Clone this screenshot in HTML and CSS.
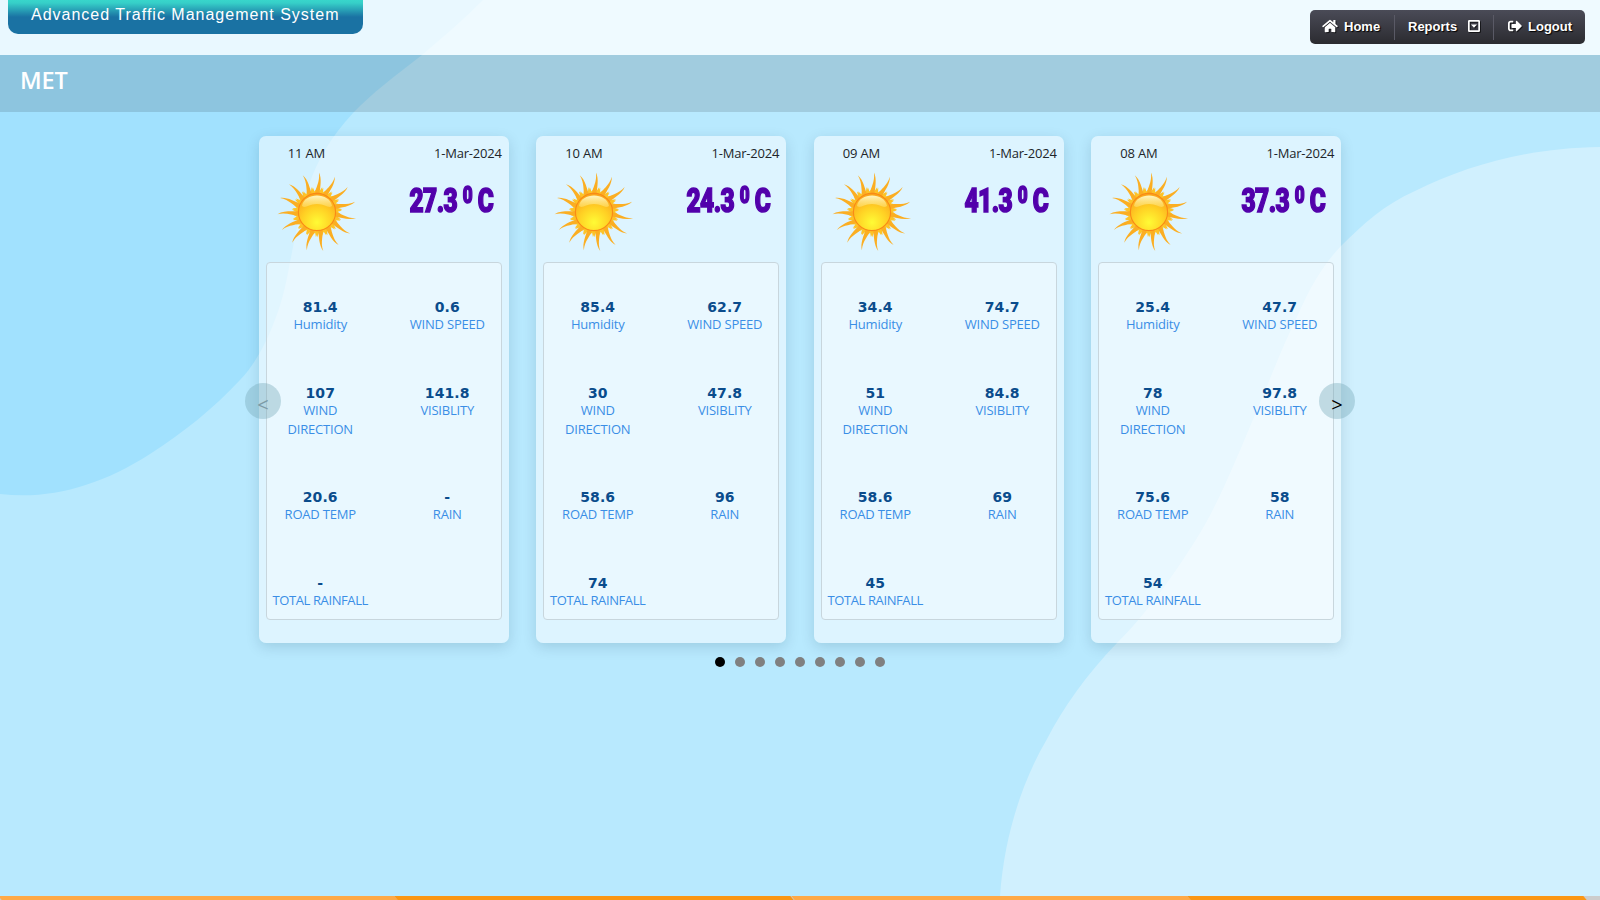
FILE: index.html
```html
<!DOCTYPE html>
<html lang="en">
<head>
<meta charset="utf-8">
<title>Advanced Traffic Management System</title>
<link rel="stylesheet" href="styles.css">
</head>
<body>
<svg class="backdrop" viewBox="0 0 1600 900" aria-hidden="true">
  <path fill="#a1e1fe" d="M0,0H483C463,20 442,38 422,55C395,76 371,94 353,113C330,138 318,160 310,182C298,215 296,235 290,262C285,290 281,305 273,325C262,352 252,367 240,380C213,409 184,432 150,454C100,486 50,500 0,494Z"/>
  <path fill="#d0f0fe" d="M1600,147C1530,148 1470,164 1415,191C1385,204 1362,225 1341,246C1318,270 1306,297 1296,319C1280,352 1270,380 1257,410C1238,455 1218,505 1197,538C1173,576 1145,616 1117,643C1086,675 1063,708 1047,739C1020,785 1004,840 1000,896V900H1600Z"/>
</svg>
<svg class="defs" width="0" height="0" aria-hidden="true">
  <defs>
    <radialGradient id="disc" cx=".5" cy=".78" r=".75"><stop offset="0" stop-color="#fffb35"/><stop offset=".55" stop-color="#ffd024"/><stop offset="1" stop-color="#fba51c"/></radialGradient>
    <linearGradient id="gloss" x1="0" y1="0" x2="0" y2="1"><stop offset="0" stop-color="#fff6c0"/><stop offset="1" stop-color="#fee16a" stop-opacity=".6"/></linearGradient>
    <path id="ray" fill="#fbae22" d="M-2.400,-18C-2.600,-24 2.200,-30 .6,-39.500C4,-33 2.200,-25 2,-18Z"/>
    <path id="spike" fill="#fdc327" d="M-6,-17L-5,-24.500L-3.200,-20.500L-1,-24L1.500,-20.500L4.300,-25L5,-17Z"/>
    <g id="rays3"><use href="#spike"/><use href="#ray"/><use href="#spike" transform="rotate(24)"/><use href="#ray" transform="rotate(24)"/><use href="#spike" transform="rotate(48)"/><use href="#ray" transform="rotate(48)"/></g>
    <symbol id="sun" viewBox="-40 -40 80 80">
      <g transform="rotate(2)"><use href="#rays3"/><use href="#rays3" transform="rotate(72)"/><use href="#rays3" transform="rotate(144)"/><use href="#rays3" transform="rotate(216)"/><use href="#rays3" transform="rotate(288)"/></g>
      <circle r="18.600" fill="url(#disc)" stroke="#f98a16" stroke-width="1.100"/>
      <path fill="url(#gloss)" d="M-15,-6C-13,-20 13,-20 15,-6C11,-3 9,-8 0,-8C-9,-8 -11,-3 -15,-6Z"/>
    </symbol>
  </defs>
</svg>

<header class="topbar">
  <div class="brand">Advanced Traffic Management System</div>
  <nav class="menu">
    <a class="menu-item home"><svg class="ico-home" viewBox="0 0 576 512"><path d="M280.37 148.26L96 300.11V464a16 16 0 0 0 16 16l112.06-.29a16 16 0 0 0 15.92-16V368a16 16 0 0 1 16-16h64a16 16 0 0 1 16 16v95.64a16 16 0 0 0 16 16.05L464 480a16 16 0 0 0 16-16V300L295.67 148.26a12.19 12.19 0 0 0-15.3 0zM571.6 251.47L488 182.56V44.05a12 12 0 0 0-12-12h-56a12 12 0 0 0-12 12v72.61L318.47 43a48 48 0 0 0-61 0L4.34 251.47a12 12 0 0 0-1.6 16.9l25.5 31A12 12 0 0 0 45.15 301l235.22-193.74a12.19 12.19 0 0 1 15.3 0L530.9 301a12 12 0 0 0 16.9-1.6l25.5-31a12 12 0 0 0-1.7-16.93z"/></svg><span>Home</span></a>
    <a class="menu-item reports"><span>Reports</span><svg class="ico-caret" viewBox="0 0 12 12"><path fill-rule="evenodd" d="M1.2,0H10.8A1.2,1.2 0 0 1 12,1.2V10.8A1.2,1.2 0 0 1 10.8,12H1.2A1.2,1.2 0 0 1 0,10.8V1.2A1.2,1.2 0 0 1 1.2,0ZM1.7,1.7V10.3H10.3V1.7ZM3,4.6H9L6,7.8Z"/></svg></a>
    <a class="menu-item logout"><svg class="ico-out" viewBox="0 0 512 512"><path d="M497 273L329 441c-15 15-41 4.500-41-17v-96H152c-13.300 0-24-10.700-24-24v-96c0-13.300 10.700-24 24-24h136V88c0-21.400 25.900-32 41-17l168 168c9.300 9.400 9.300 24.600 0 34zM192 436v-40c0-6.600-5.400-12-12-12H96c-17.700 0-32-14.300-32-32V160c0-17.700 14.300-32 32-32h84c6.600 0 12-5.400 12-12V76c0-6.600-5.400-12-12-12H96c-53 0-96 43-96 96v192c0 53 43 96 96 96h84c6.600 0 12-5.400 12-12z"/></svg><span>Logout</span></a>
  </nav>
</header>
<div class="title-band"><h1>MET</h1></div>

<main class="carousel">
  <button class="arrow prev">&lt;</button>
  <div class="track">
    <article class="card">
      <div class="when"><span>11 AM</span><span>1-Mar-2024</span></div>
      <div class="sky"><svg class="sun"><use href="#sun"/></svg><div class="temp">27.3 <span class="deg">0</span> C</div></div>
      <div class="stats">
        <div class="stat"><b>81.4</b><span>Humidity</span></div><div class="stat"><b>0.6</b><span>WIND SPEED</span></div>
        <div class="stat"><b>107</b><span>WIND DIRECTION</span></div><div class="stat"><b>141.8</b><span>VISIBLITY</span></div>
        <div class="stat"><b>20.6</b><span>ROAD TEMP</span></div><div class="stat"><b>-</b><span>RAIN</span></div>
        <div class="stat"><b>-</b><span class="total">TOTAL RAINFALL</span></div>
      </div>
    </article>
    <article class="card">
      <div class="when"><span>10 AM</span><span>1-Mar-2024</span></div>
      <div class="sky"><svg class="sun"><use href="#sun"/></svg><div class="temp">24.3 <span class="deg">0</span> C</div></div>
      <div class="stats">
        <div class="stat"><b>85.4</b><span>Humidity</span></div><div class="stat"><b>62.7</b><span>WIND SPEED</span></div>
        <div class="stat"><b>30</b><span>WIND DIRECTION</span></div><div class="stat"><b>47.8</b><span>VISIBLITY</span></div>
        <div class="stat"><b>58.6</b><span>ROAD TEMP</span></div><div class="stat"><b>96</b><span>RAIN</span></div>
        <div class="stat"><b>74</b><span class="total">TOTAL RAINFALL</span></div>
      </div>
    </article>
    <article class="card">
      <div class="when"><span>09 AM</span><span>1-Mar-2024</span></div>
      <div class="sky"><svg class="sun"><use href="#sun"/></svg><div class="temp">41.3 <span class="deg">0</span> C</div></div>
      <div class="stats">
        <div class="stat"><b>34.4</b><span>Humidity</span></div><div class="stat"><b>74.7</b><span>WIND SPEED</span></div>
        <div class="stat"><b>51</b><span>WIND DIRECTION</span></div><div class="stat"><b>84.8</b><span>VISIBLITY</span></div>
        <div class="stat"><b>58.6</b><span>ROAD TEMP</span></div><div class="stat"><b>69</b><span>RAIN</span></div>
        <div class="stat"><b>45</b><span class="total">TOTAL RAINFALL</span></div>
      </div>
    </article>
    <article class="card">
      <div class="when"><span>08 AM</span><span>1-Mar-2024</span></div>
      <div class="sky"><svg class="sun"><use href="#sun"/></svg><div class="temp">37.3 <span class="deg">0</span> C</div></div>
      <div class="stats">
        <div class="stat"><b>25.4</b><span>Humidity</span></div><div class="stat"><b>47.7</b><span>WIND SPEED</span></div>
        <div class="stat"><b>78</b><span>WIND DIRECTION</span></div><div class="stat"><b>97.8</b><span>VISIBLITY</span></div>
        <div class="stat"><b>75.6</b><span>ROAD TEMP</span></div><div class="stat"><b>58</b><span>RAIN</span></div>
        <div class="stat"><b>54</b><span class="total">TOTAL RAINFALL</span></div>
      </div>
    </article>
  </div>
  <button class="arrow next">&gt;</button>
  <div class="dots"><i class="on"></i><i></i><i></i><i></i><i></i><i></i><i></i><i></i><i></i></div>
</main>

<footer class="strip"><i></i><i></i><i></i><i></i></footer>
</body>
</html>
```
FILE: styles.css
```css
* { box-sizing: border-box; }

body {
  margin: 0;
  height: 900px;
  overflow: hidden;
  display: flex;
  flex-direction: column;
  background: #b8e9fe;
  color: #212529;
  font: 13px/19px "Open Sans", "Noto Sans", sans-serif;
  letter-spacing: -.2px;
}

.backdrop { position: absolute; inset: 0; width: 1600px; height: 900px; z-index: -1; }
.defs { position: absolute; }

.topbar {
  flex: none;
  display: flex;
  justify-content: space-between;
  align-items: flex-start;
  height: 55px;
  padding: 0 15px 0 8px;
  background: rgba(255, 255, 255, .77);
}

.brand {
  width: 355px;
  height: 34px;
  border-radius: 0 0 10px 10px;
  background: linear-gradient(#38d6cb 0, #36cfc8 3px, #1a72a3 17px, #1a72a3 100%);
  color: #fff;
  font: 16px/29px "Liberation Sans", Arial, sans-serif;
  letter-spacing: 1px;
  padding-left: 23px;
  white-space: nowrap;
}

.menu {
  display: flex;
  align-items: center;
  width: 275px;
  height: 34px;
  margin-top: 10px;
  border-radius: 5px;
  background: linear-gradient(#4a4b57, #2b2b30);
  color: #fff;
  font: bold 13px/23px "Liberation Sans", Arial, sans-serif;
  letter-spacing: 0;
  text-shadow: 1px 1px 1px #000;
}

.menu-item { display: flex; align-items: center; height: 25px; padding-bottom: 2px; }
.menu-item svg { fill: #fff; filter: drop-shadow(1px 1px 0 rgba(0, 0, 0, .6)); }
.home { width: 84px; padding-left: 12px; gap: 6px; }
.reports { width: 99px; padding-left: 13px; gap: 11px; border-left: 1px solid #5a5a66; }
.logout { width: 92px; padding-left: 14px; gap: 6px; border-left: 1px solid #5a5a66; }
.ico-home { width: 16px; height: 14px; }
.ico-caret { width: 12px; height: 12px; }
.ico-out { width: 14px; height: 14px; }

.title-band {
  flex: none;
  height: 57px;
  padding-left: 20px;
  background: rgba(30, 35, 40, .145);
}

.title-band h1 {
  margin: 0;
  color: #fff;
  font: 600 23.5px/50px "Open Sans", "Noto Sans", sans-serif;
  letter-spacing: -.1px;
}

.carousel {
  position: relative;
  width: 1110px;
  margin: 24px auto 0;
  flex: 1;
}

.track { display: flex; gap: 27.5px; padding-left: 13.75px; }

.card {
  flex: none;
  width: 250px;
  height: 507px;
  padding: 8px 7px 0;
  border-radius: 7px;
  background: rgba(255, 255, 255, .52);
  box-shadow: 0 4px 14px rgba(0, 50, 70, .15);
}

.when { display: flex; justify-content: space-between; padding-left: 22px; height: 19px; }

.sky { display: flex; justify-content: space-between; height: 99px; padding: 9px 9px 0 11px; }
.sun { width: 80px; height: 80px; }

.temp {
  color: #5200ab;
  font: 900 33px/57px Impact, Roboto, sans-serif;
  letter-spacing: -.7px;
  transform: scaleX(.74);
  transform-origin: right;
  -webkit-text-stroke: 1.6px #5200ab;
  white-space: nowrap;
}

.deg { font-size: 23px; position: relative; top: -9px; line-height: 0; }

.stats {
  display: grid;
  grid-template-columns: 97px 97px;
  justify-content: space-between;
  row-gap: 50.6px;
  height: 358px;
  padding: 36px 5px 0;
  align-content: start;
  border: 1px solid #c8d6dd;
  border-radius: 4px;
  background: rgba(255, 255, 255, .35);
}

.stat { text-align: center; color: #3a8ee6; }

.stat b {
  display: block;
  color: #0a4c8c;
  font: bold 14px/16px "DejaVu Sans", Verdana, sans-serif;
  letter-spacing: .1px;
}

.stat span { display: block; }
.stat .total { white-space: nowrap; letter-spacing: -.4px; }

.arrow {
  position: absolute;
  top: 247px;
  width: 36px;
  height: 36px;
  padding: 8px 0 0;
  border: 0;
  border-radius: 50%;
  background: rgba(120, 170, 185, .4);
  color: #000;
  font: 20px/36px "Open Sans", sans-serif;
  display: flex;
  align-items: center;
  justify-content: center;
}

.prev { left: 0; color: #7d9aa6; z-index: 1; }
.next { right: 0; }

.dots { display: flex; justify-content: center; gap: 10px; margin-top: 14px; }
.dots i { width: 10px; height: 10px; border-radius: 50%; background: #808080; }
.dots .on { background: #000; }

.strip { flex: none; display: flex; height: 4px; padding-right: 15px; background: #ccc; overflow: hidden; }
.strip i { flex: 1; background: #fb9614; transform: skewX(40deg); }
.strip i:nth-child(odd) { background: #ffa947; }
```
